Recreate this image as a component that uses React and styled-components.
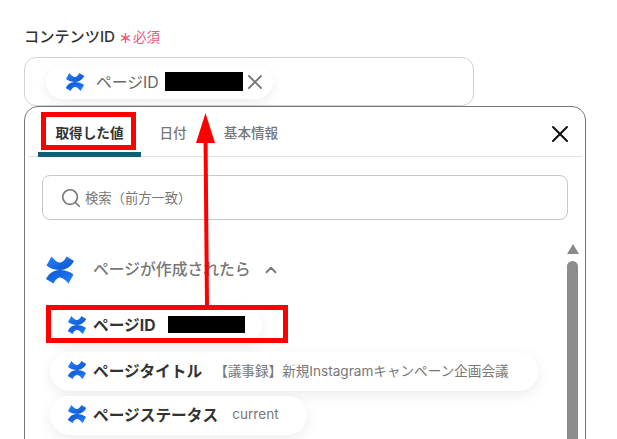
import React, { useId } from "react";
import styled, { createGlobalStyle } from "styled-components";
import { X, Search, ChevronUp } from "lucide-react";

const GlobalStyle = createGlobalStyle`
  html, body {
    margin: 0;
    padding: 0;
    width: 617px;
    height: 439px;
    overflow: hidden;
    background: #fff;
    font-family: Inter, "Noto Sans CJK JP", sans-serif;
  }
`;

const Page = styled.div`
  position: relative;
  width: 617px;
  height: 439px;
  overflow: hidden;
  padding: 25px 31px 0 24px;
  box-sizing: border-box;
`;

const LabelRow = styled.div`
  display: flex;
  align-items: center;
  height: 20px;
  margin-bottom: 12px;
`;

const Label = styled.span`
  font-size: 15.2px;
  font-weight: 500;
  color: #333;
`;

const Required = styled.span`
  display: flex;
  align-items: center;
  margin-left: 4px;
  margin-top: 2px;
  font-size: 13.5px;
  color: #f4557c;
`;

const Star = styled.span`
  font-size: 13px;
  line-height: 12px;
  margin-right: 1px;
  margin-top: 3px;
  font-weight: 900;
`;

const InputBox = styled.div`
  width: 450px;
  height: 49px;
  box-sizing: border-box;
  border: 1px solid #d2d2d6;
  border-radius: 12px;
  padding: 7px 0 0 21px;
`;

const SelectedChip = styled.div`
  display: inline-flex;
  align-items: center;
  width: 227px;
  height: 34px;
  box-sizing: border-box;
  padding: 0 0 1px 19px;
  border-radius: 17px;
  background: #fff;
  box-shadow: 0 4px 12px rgba(0, 0, 0, 0.07);
  font-size: 15.8px;
  color: #666;
`;

const SelectedName = styled.span`
  margin-left: 11px;
`;

const Masked = styled.span`
  display: inline-block;
  width: ${(p) => p.$w}px;
  height: ${(p) => p.$h}px;
  margin-left: ${(p) => p.$ml}px;
  background: #000;
  flex-shrink: 0;
`;

const RemoveButton = styled.span`
  display: flex;
  color: #777;
`;

const Panel = styled.div`
  position: relative;
  width: 562px;
  height: 360px;
  box-sizing: border-box;
  border: 1px solid #777;
  border-radius: 14px;
  background: #fff;
`;

const TabBar = styled.div`
  display: flex;
  align-items: stretch;
  height: 49px;
  margin: 0 3px;
  padding-left: 10px;
  border-bottom: 1px solid #e2e2e4;
`;

const Tab = styled.div`
  display: flex;
  align-items: center;
  justify-content: center;
  width: ${(p) => p.$w}px;
  padding-top: 4px;
  box-sizing: border-box;
  font-size: 13.6px;
  font-weight: ${(p) => (p.$active ? 700 : 500)};
  color: ${(p) => (p.$active ? "#333" : "#777")};
  border-bottom: 5px solid ${(p) => (p.$active ? "#0e6079" : "transparent")};
  border-radius: 6px 6px 0 0;
  margin-bottom: -1px;
`;

const CloseButton = styled.span`
  position: absolute;
  top: 13px;
  right: 11px;
  display: flex;
  color: #111;
`;

const SearchBox = styled.div`
  display: flex;
  align-items: center;
  width: 526px;
  height: 45px;
  box-sizing: border-box;
  margin: 18px 0 0 17px;
  padding-left: 17px;
  border: 1px solid #c8c8cc;
  border-radius: 8px;
  font-size: 13.3px;
  color: #777;
`;

const SearchText = styled.span`
  margin-left: 3px;
`;

const SectionHead = styled.div`
  display: flex;
  align-items: center;
  margin: 34px 0 0 20px;
  height: 32px;
  font-size: 15.8px;
  font-weight: 500;
  color: #777;
`;

const SectionTitle = styled.span`
  margin: 0 0 3px 18px;
`;

const Chevron = styled.span`
  display: flex;
  margin-left: 11px;
  color: #777;
`;

const ChipList = styled.div`
  display: flex;
  flex-direction: column;
  align-items: flex-start;
  gap: 5px;
  margin: 22px 0 0 25px;
`;

const OutputChip = styled.div`
  display: inline-flex;
  align-items: center;
  height: ${(p) => p.$h || 39}px;
  width: ${(p) => p.$w}px;
  margin-bottom: ${(p) => p.$mb || 0}px;
  box-sizing: border-box;
  padding: 0 0 ${(p) => p.$pb ?? 3}px 17px;
  border-radius: 20px;
  background: #fff;
  box-shadow: 0 4px 14px rgba(0, 0, 0, 0.08);
  white-space: nowrap;
`;

const ChipName = styled.span`
  margin-left: 6px;
  font-size: 15.7px;
  font-weight: 700;
  color: #333;
`;

const ChipValue = styled.span`
  margin-left: ${(p) => p.$ml}px;
  font-size: 13.6px;
  color: #777;
`;

const ScrollTrack = styled.div`
  position: absolute;
  top: 137px;
  right: 7px;
  width: 11px;
  display: flex;
  flex-direction: column;
  align-items: center;
`;

const ScrollArrow = styled.div`
  width: 0;
  height: 0;
  border-left: 6px solid transparent;
  border-right: 6px solid transparent;
  border-bottom: 10px solid #8a8a8a;
`;

const ScrollThumb = styled.div`
  width: 11px;
  height: 190px;
  margin-top: 7px;
  border-radius: 6px;
  background: #8c8c8c;
`;

const RedBox = styled.div`
  position: absolute;
  left: ${(p) => p.$x}px;
  top: ${(p) => p.$y}px;
  width: ${(p) => p.$w}px;
  height: ${(p) => p.$h}px;
  box-sizing: border-box;
  border: 5px solid #f00;
`;

const ArrowLayer = styled.svg`
  position: absolute;
  left: 0;
  top: 0;
`;

function ConfluenceLogo({ size }) {
  const id = useId();
  const band =
    "M1.5 10.5 L6.5 1.5 C10 5.5 13 8 15.5 7.5 C18 7 20 4.5 21.5 1.5 L29 6 C26 11.5 21.5 15 15.5 15 C10 15 5 13.5 1.5 10.5 Z";
  return (
    <svg width={size} height={size} viewBox="0 0 30 30" style={{ flexShrink: 0 }}>
      <defs>
        <linearGradient id={id} x1="0" y1="0" x2="1" y2="1">
          <stop offset="0" stopColor="#2684ff" />
          <stop offset="1" stopColor="#0b52cc" />
        </linearGradient>
      </defs>
      <path d={band} fill={`url(#${id})`} />
      <path d={band} fill={`url(#${id})`} transform="rotate(180 15 15)" />
    </svg>
  );
}

export default function App() {
  return (
    <Page>
      <GlobalStyle />
      <LabelRow>
        <Label>コンテンツID</Label>
        <Required>
          <Star>＊</Star>必須
        </Required>
      </LabelRow>
      <InputBox>
        <SelectedChip>
          <ConfluenceLogo size={20} />
          <SelectedName>ページID</SelectedName>
          <Masked $w={78} $h={19} $ml={6} />
          <RemoveButton>
            <X size={24} strokeWidth={1.8} />
          </RemoveButton>
        </SelectedChip>
      </InputBox>
      <Panel>
        <TabBar>
          <Tab $active $w={103}>取得した値</Tab>
          <Tab $w={64}>日付</Tab>
          <Tab $w={92}>基本情報</Tab>
        </TabBar>
        <CloseButton>
          <X size={28} strokeWidth={1.7} />
        </CloseButton>
        <SearchBox>
          <Search size={22} strokeWidth={1.8} />
          <SearchText>検索（前方一致）</SearchText>
        </SearchBox>
        <SectionHead>
          <ConfluenceLogo size={30} />
          <SectionTitle>ページが作成されたら</SectionTitle>
          <Chevron>
            <ChevronUp size={18} strokeWidth={2.4} />
          </Chevron>
        </SectionHead>
        <ChipList>
          <OutputChip $w={212} $h={34} $mb={5} $pb={1}>
            <ConfluenceLogo size={20} />
            <ChipName>ページID</ChipName>
            <Masked $w={77} $h={17} $ml={13} />
          </OutputChip>
          <OutputChip $w={488}>
            <ConfluenceLogo size={20} />
            <ChipName>ページタイトル</ChipName>
            <ChipValue $ml={12}>【議事録】新規Instagramキャンペーン企画会議</ChipValue>
          </OutputChip>
          <OutputChip $w={257}>
            <ConfluenceLogo size={20} />
            <ChipName>ページステータス</ChipName>
            <ChipValue $ml={14}>current</ChipValue>
          </OutputChip>
        </ChipList>
        <ScrollTrack>
          <ScrollArrow />
          <ScrollThumb />
        </ScrollTrack>
      </Panel>
      <RedBox $x={41} $y={112} $w={95} $h={38} />
      <RedBox $x={46} $y={305} $w={242} $h={38} />
      <ArrowLayer width="617" height="439">
        <line x1="207" y1="306" x2="205.5" y2="135" stroke="#f00" strokeWidth="4" />
        <polygon points="205.5,113 196,143 215,143" fill="#f00" />
      </ArrowLayer>
    </Page>
  );
}
